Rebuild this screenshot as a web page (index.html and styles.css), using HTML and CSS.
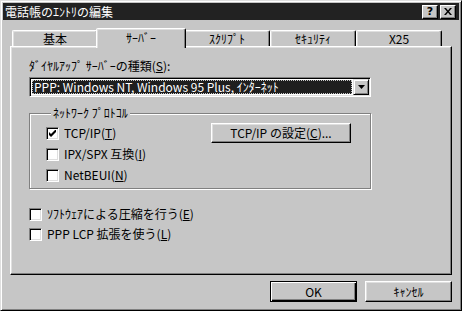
FILE: index.html
```html
<!doctype html>
<html>
<head>
    <meta charset="UTF-8">
    <title>電話帳のｴﾝﾄﾘの編集</title>
    <link rel="stylesheet" href="styles.css">
</head>

<body>
    <div class="window">
        <div class="titlebar">
            <span class="title">電話帳のｴﾝﾄﾘの編集</span>
            <div class="title-buttons">
                <span class="tbtn">?</span>
                <span class="tbtn">
                    <svg width="8" height="7" viewBox="0 0 8 7">
                        <path d="M0 0 H2 L4 2.5 L6 0 H8 L5 3.5 L8 7 H6 L4 4.5 L2 7 H0 L3 3.5 Z" fill="#000"/>
                    </svg>
                </span>
            </div>
        </div>

        <div class="content">
            <div class="tabs">
                <div class="tab">基本</div>
                <div class="tab active">ｻｰﾊﾞｰ</div>
                <div class="tab">ｽｸﾘﾌﾟﾄ</div>
                <div class="tab">ｾｷｭﾘﾃｨ</div>
                <div class="tab">X25</div>
            </div>

            <div class="panel">
                <div class="label">ﾀﾞｲﾔﾙｱｯﾌﾟ ｻｰﾊﾞｰの種類(<u>S</u>):</div>
                <div class="select">
                    <div class="select-value">PPP: Windows NT, Windows 95 Plus, ｲﾝﾀｰﾈｯﾄ</div>
                    <div class="select-arrow">
                        <svg width="7" height="4" viewBox="0 0 7 4"><path d="M0 0 H7 L3.5 4 Z" fill="#000"/></svg>
                    </div>
                </div>

                <fieldset class="group">
                    <legend>ﾈｯﾄﾜｰｸ ﾌﾟﾛﾄｺﾙ</legend>
                    <div class="group-body">
                        <div class="checks">
                            <div class="check">
                                <span class="box">
                                    <svg width="7" height="7" viewBox="0 0 7 7"><path d="M0 2 L2 4 L7 -1 L7 2 L2 7 L0 5 Z" fill="#000"/></svg>
                                </span>
                                <span>TCP/IP(<u>T</u>)</span>
                            </div>
                            <div class="check"><span class="box"></span><span>IPX/SPX 互換(<u>I</u>)</span></div>
                            <div class="check"><span class="box"></span><span>NetBEUI(<u>N</u>)</span></div>
                        </div>
                        <div class="button wide"><span>TCP/IP の設定(<u>C</u>)...</span></div>
                    </div>
                </fieldset>

                <div class="options">
                    <div class="check"><span class="box"></span><span>ｿﾌﾄｳｪｱによる圧縮を行う(<u>E</u>)</span></div>
                    <div class="check"><span class="box"></span><span>PPP LCP 拡張を使う(<u>L</u>)</span></div>
                </div>
            </div>

            <div class="actions">
                <div class="button default">OK</div>
                <div class="button">ｷｬﾝｾﾙ</div>
            </div>
        </div>
    </div>
</body>
</html>
```

FILE: styles.css
```css
body {
    margin: 0;
    font-family: "Noto Sans CJK JP", sans-serif;
    font-size: 12px;
    line-height: 14px;
    color: #000;
    background: #c6c6c6;
}
u {
    text-decoration: underline;
}
.window {
    width: 462px;
    height: 311px;
    box-sizing: border-box;
    border: 1px solid;
    border-color: #dfdfdf #000 #000 #dfdfdf;
    padding: 2px;
    box-shadow: inset 1px 1px #fff, inset -1px -1px #808080;
    background: #c6c6c6;
}
.titlebar {
    height: 17px;
    background: #222;
    display: flex;
    align-items: center;
    justify-content: space-between;
    padding: 0 3px 0 2px;
}
.title {
    color: #fff;
    font-size: 12px;
}
.title-buttons {
    display: flex;
    gap: 2px;
}
.tbtn {
    width: 16px;
    height: 14px;
    box-sizing: border-box;
    border: 1px solid;
    border-color: #fff #000 #000 #fff;
    box-shadow: inset -1px -1px #808080;
    background: #c6c6c6;
    display: flex;
    align-items: center;
    justify-content: center;
    font-family: "DejaVu Sans", sans-serif;
    font-weight: bold;
    font-size: 11px;
    line-height: 12px;
}
.content {
    padding: 8px 7px 0 7px;
}
.tabs {
    display: flex;
    align-items: flex-end;
    height: 18px;
    padding-left: 2px;
}
.tab {
    width: 86px;
    height: 16px;
    box-sizing: border-box;
    border: 1px solid;
    border-bottom: none;
    border-color: #fff #000 transparent #fff;
    border-radius: 2px 2px 0 0;
    box-shadow: inset -1px 0 #808080, inset 1px 1px #dfdfdf;
    display: flex;
    justify-content: center;
    padding-top: 1px;
}
.tab.active {
    position: relative;
    z-index: 1;
    width: 90px;
    height: 20px;
    margin: 0 -2px -2px -2px;
    background: #c6c6c6;
    padding-top: 2px;
}
.panel {
    height: 229px;
    box-sizing: border-box;
    border: 1px solid;
    border-color: #fff #000 #000 #fff;
    box-shadow: inset -1px -1px #808080, inset 1px 1px #dfdfdf;
    padding: 12px 0 0 18px;
}
.label {
    height: 14px;
}
.select {
    margin-top: 4px;
    width: 342px;
    height: 20px;
    box-sizing: border-box;
    border: 1px solid;
    border-color: #808080 #fff #fff #808080;
    box-shadow: inset 1px 1px #000, inset -1px -1px #dfdfdf;
    background: #fff;
    padding: 1px;
    display: flex;
}
.select-value {
    flex: 1;
    margin: 1px;
    background: #1e1e1e;
    color: #fff;
    outline: 1px dotted #c6c6c6;
    outline-offset: -1px;
    padding-left: 2px;
    white-space: nowrap;
}
.select-arrow {
    width: 16px;
    box-sizing: border-box;
    border: 1px solid;
    border-color: #dfdfdf #000 #000 #dfdfdf;
    box-shadow: inset 1px 1px #fff, inset -1px -1px #808080;
    background: #c6c6c6;
    display: flex;
    align-items: center;
    justify-content: center;
}
.group {
    margin: 9px 0 0 0;
    padding: 3px 19px 3px 16px;
    width: 342px;
    box-sizing: border-box;
    border: 1px solid #808080;
    box-shadow: inset 1px 1px #fff, 1px 1px #fff;
}
.group legend {
    margin-left: 5px;
    padding: 0 2px;
    background: #c6c6c6;
    line-height: 14px;
}
.group-body {
    display: flex;
    justify-content: space-between;
    align-items: flex-start;
}
.checks {
    display: flex;
    flex-direction: column;
    gap: 1px;
}
.check {
    height: 20px;
    display: flex;
    align-items: center;
    gap: 5px;
}
.box {
    width: 13px;
    height: 13px;
    box-sizing: border-box;
    border: 1px solid;
    border-color: #808080 #fff #fff #808080;
    box-shadow: inset 1px 1px #000, inset -1px -1px #dfdfdf;
    background: #fff;
    display: flex;
    align-items: center;
    justify-content: center;
}
.options {
    margin-top: 15px;
}
.button {
    height: 21px;
    box-sizing: border-box;
    border: 1px solid;
    border-color: #fff #000 #000 #fff;
    box-shadow: inset -1px -1px #808080, inset 1px 1px #dfdfdf;
    display: flex;
    align-items: center;
    justify-content: center;
}
.button.wide {
    width: 140px;
    height: 20px;
}
.actions {
    display: flex;
    justify-content: flex-end;
    gap: 8px;
    margin-top: 6px;
}
.actions .button {
    width: 87px;
}
.button.default {
    border-color: #000;
    box-shadow: inset 1px 1px #fff, inset -1px -1px #000, inset -2px -2px #808080;
}
```
